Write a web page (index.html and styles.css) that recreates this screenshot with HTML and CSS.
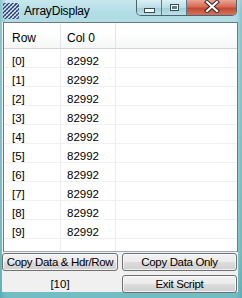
FILE: index.html
```html
<!DOCTYPE html>
<html>
<head>
<meta charset="utf-8">
<link rel="stylesheet" href="styles.css">
</head>
<body>
<div class="window">
  <div class="titlebar">
    <svg class="appicon" width="16" height="16" viewBox="0 0 16 16">
      <rect x="0" y="0" width="16" height="16" fill="#24407e"/>
      <path d="M0 4 L4 0 M0 8 L8 0 M0 12 L12 0 M0 16 L16 0 M4 16 L16 4 M8 16 L16 8 M12 16 L16 12" stroke="#e8eef8" stroke-width="1.2"/>
      <path d="M0 12 L4 16 M0 8 L8 16 M0 4 L12 16 M0 0 L16 16 M4 0 L16 12 M8 0 L16 8" stroke="#9fb4dc" stroke-width="0.8"/>
    </svg>
    <span class="title">ArrayDisplay</span>
    <div class="caption">
      <div class="cbtn cmin"><span class="gmin"></span></div>
      <div class="cbtn cmax"><span class="gmax"></span></div>
      <div class="cbtn cclose">
        <svg width="16" height="13" viewBox="0 0 16 13">
          <path d="M3 2 L13 11 M13 2 L3 11" stroke="#3a2a2a" stroke-width="4.2" stroke-linecap="square"/>
          <path d="M3 2 L13 11 M13 2 L3 11" stroke="#ffffff" stroke-width="2.2" stroke-linecap="square"/>
        </svg>
      </div>
    </div>
  </div>
  <div class="client">
    <div class="list">
      <div class="grid">
        <div class="h h1">Row</div><div class="h h2">Col 0</div><div class="h h3"></div>
        <div class="c c1">[0]</div><div class="c c2">82992</div><div class="c c3"></div>
        <div class="c c1">[1]</div><div class="c c2">82992</div><div class="c c3"></div>
        <div class="c c1">[2]</div><div class="c c2">82992</div><div class="c c3"></div>
        <div class="c c1">[3]</div><div class="c c2">82992</div><div class="c c3"></div>
        <div class="c c1">[4]</div><div class="c c2">82992</div><div class="c c3"></div>
        <div class="c c1">[5]</div><div class="c c2">82992</div><div class="c c3"></div>
        <div class="c c1">[6]</div><div class="c c2">82992</div><div class="c c3"></div>
        <div class="c c1">[7]</div><div class="c c2">82992</div><div class="c c3"></div>
        <div class="c c1">[8]</div><div class="c c2">82992</div><div class="c c3"></div>
        <div class="c c1">[9]</div><div class="c c2">82992</div><div class="c c3"></div>
        <div class="f c1"></div><div class="f c2"></div><div class="f c3"></div>
      </div>
    </div>
    <div class="buttons">
      <button class="btn">Copy Data &amp; Hdr/Row</button>
      <button class="btn">Copy Data Only</button>
      <div class="count">[10]</div>
      <button class="btn">Exit Script</button>
    </div>
  </div>
</div>
</body>
</html>
```
FILE: styles.css
```css
html, body {
  margin: 0;
  padding: 0;
}
body {
  width: 242px;
  height: 298px;
  overflow: hidden;
  font-family: "Liberation Sans", Arial, sans-serif;
}
.window {
  width: 242px;
  height: 298px;
  display: flex;
  flex-direction: column;
  background:
    linear-gradient(to right, rgba(60,140,150,0.35), rgba(255,255,255,0) 6px, rgba(255,255,255,0) 236px, rgba(60,140,150,0.35)),
    linear-gradient(to bottom, #c8e8ee 0px, #b3dde5 12px, #a5d6df 40%, #8ecbd1 85%, #6fbcc2 100%);
}
.titlebar {
  height: 22px;
  display: flex;
  align-items: flex-start;
  position: relative;
  flex: none;
}
.appicon {
  margin: 3px 0 0 3px;
}
.title {
  margin: 4px 0 0 5px;
  font-size: 12px;
  line-height: 14px;
  color: #000;
  letter-spacing: -0.2px;
}
.caption {
  position: absolute;
  top: 0;
  left: 136px;
  width: 101px;
  height: 16px;
  display: flex;
  box-sizing: border-box;
  border: 1px solid #4a6470;
  border-top: none;
  border-radius: 0 0 5px 5px;
  overflow: hidden;
}
.cbtn {
  height: 100%;
  display: flex;
  align-items: center;
  justify-content: center;
  box-sizing: border-box;
}
.cmin, .cmax {
  width: 25px;
  border-right: 1px solid #5d7b86;
  background: linear-gradient(to bottom, #dcf0f4, #bcdde4 50%, #a2cdd5 51%, #bde1e7);
}
.cclose {
  flex: 1;
  background: linear-gradient(to bottom, #e9a594, #d66b55 45%, #c44a32 55%, #d4735c);
  align-items: flex-start;
  padding-top: 0;
}
.gmin {
  width: 9px;
  height: 3px;
  margin-top: 5px;
  background: #fff;
  border: 1px solid #324c58;
}
.gmax {
  width: 7px;
  height: 5px;
  border: 1px solid #324c58;
  background: #fff;
  box-shadow: inset 0 0 0 1px #fff, inset 0 0 0 3px #5a7f8b;
  margin-top: -1px;
}
.client {
  flex: none;
  height: 270px;
  margin: 0 4px 0 2px;
  background: #f0f0f0;
  display: flex;
  flex-direction: column;
}
.list {
  margin: 0 0 0 1px;
  height: 230px;
  box-sizing: border-box;
  border: 1px solid #6e7a82;
  border-bottom-color: #a0a8b0;
  background: #fff;
  flex: none;
  display: flex;
  flex-direction: column;
}
.grid {
  flex: 1;
  display: grid;
  grid-template-columns: 57px 55px 1fr;
  grid-template-rows: 26px repeat(10, 19px) 1fr;
  font-size: 11.5px;
  color: #000;
}
.h, .c, .f {
  box-sizing: border-box;
  white-space: nowrap;
  line-height: 14px;
}
.h {
  padding-top: 8px;
  font-size: 12px;
  border-bottom: 1px solid #d5d5d5;
  background: linear-gradient(to bottom, #ffffff, #ffffff 40%, #f6f7f8);
}
.c {
  padding-top: 5px;
  border-bottom: 1px solid #f0f0f0;
}
.c1 {
  padding-left: 8px;
  border-right: 1px solid #ececec;
}
.c2 {
  padding-left: 6px;
  border-right: 1px solid #ececec;
}
.h1, .h2 {
  border-right: 1px solid #e3e5e8;
}
.h1 {
  padding-left: 8px;
}
.h2 {
  padding-left: 6px;
}
.c3, .h3 {
  border-right: none;
}
.buttons {
  display: grid;
  grid-template-columns: 116px 115px;
  column-gap: 4px;
  row-gap: 4px;
  margin-top: 1px;
}
.btn {
  height: 18px;
  margin: 0;
  padding: 0;
  box-sizing: border-box;
  border: 1px solid #707070;
  border-radius: 3px;
  background: linear-gradient(to bottom, #f2f2f2, #ebebeb 50%, #dddddd 51%, #cfcfcf);
  box-shadow: inset 0 0 0 1px rgba(255,255,255,0.7);
  font-family: "Liberation Sans", Arial, sans-serif;
  font-size: 11.5px;
  letter-spacing: -0.35px;
  color: #000;
  line-height: 14px;
}
.count {
  text-align: center;
  font-size: 11.5px;
  line-height: 18px;
  color: #000;
}
```
